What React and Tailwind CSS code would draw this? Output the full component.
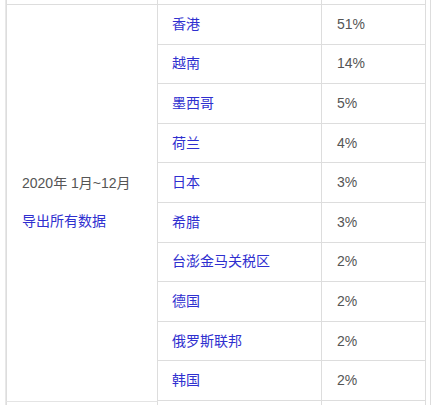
const ROWS = [
  ["香港", "51%"],
  ["越南", "14%"],
  ["墨西哥", "5%"],
  ["荷兰", "4%"],
  ["日本", "3%"],
  ["希腊", "3%"],
  ["台澎金马关税区", "2%"],
  ["德国", "2%"],
  ["俄罗斯联邦", "2%"],
  ["韩国", "2%"],
];

const font = { fontFamily: '"Liberation Sans", "Noto Sans CJK SC", sans-serif' };

export default function App() {
  return (
    <div className="w-[433px] h-[405px] bg-white overflow-hidden text-[14px]" style={font}>
      <div className="ml-[5px] w-[426px] h-full border-l border-[#e8e8e8] border-r border-r-[#dddddd] flex flex-col">
        {/* the row above, cut off */}
        <div className="flex h-[4px] shrink-0">
          <div className="w-[152px] border-l border-[#dddddd] border-r"></div>
          <div className="w-[164px] border-r border-[#dddddd]"></div>
          <div className="w-[104px] border-r border-[#dddddd]"></div>
        </div>

        <div className="flex shrink-0">
          <div className="w-[152px] border-l border-r border-t border-[#dddddd] flex flex-col justify-center pl-[15px] gap-[21px]">
            <div className="text-[#555555] leading-[17px]">2020年 1月~12月</div>
            <div className="text-[#2f2fcf] leading-[17px]">导出所有数据</div>
          </div>
          <div className="w-[268px] flex flex-col border-t border-[#dddddd]">
            {ROWS.map(([name, pct]) => (
              <div key={name} className="flex h-[39.6px] border-b border-[#dddddd]">
                <div className="w-[164px] border-r border-[#dddddd] flex items-center pl-[14px] text-[#2f2fcf]">
                  {name}
                </div>
                <div className="w-[104px] border-r border-[#dddddd] flex items-center pl-[15px] text-[#555555]">
                  {pct}
                </div>
              </div>
            ))}
          </div>
        </div>

        <div className="flex flex-1">
          <div className="w-[152px] border-l border-r border-t border-[#dddddd] border-t-[#e4e4e4]"></div>
          <div className="w-[164px] border-r border-[#dddddd]"></div>
          <div className="w-[104px] border-r border-[#dddddd]"></div>
        </div>
      </div>
    </div>
  );
}
